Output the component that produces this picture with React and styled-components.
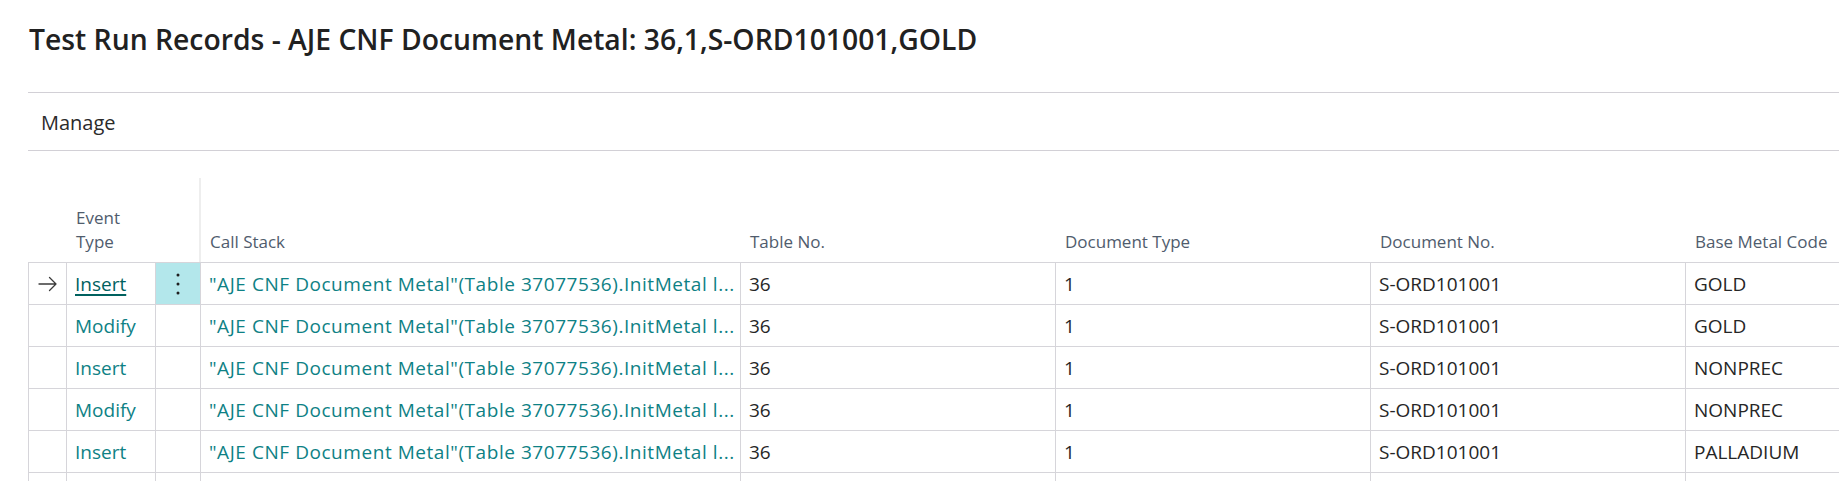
import React from "react";
import styled, { createGlobalStyle } from "styled-components";

const GlobalStyle = createGlobalStyle`
  html, body {
    margin: 0;
    background: #ffffff;
    overflow: hidden;
  }
  body {
    font-family: "Open Sans", "Noto Sans", sans-serif;
    color: #212121;
  }
`;

const COLUMNS = "38px 89px 45px 540px 315px 315px 315px 1fr";

const records = [
  { event: "Insert", table: "36", docType: "1", docNo: "S-ORD101001", metal: "GOLD" },
  { event: "Modify", table: "36", docType: "1", docNo: "S-ORD101001", metal: "GOLD" },
  { event: "Insert", table: "36", docType: "1", docNo: "S-ORD101001", metal: "NONPREC" },
  { event: "Modify", table: "36", docType: "1", docNo: "S-ORD101001", metal: "NONPREC" },
  { event: "Insert", table: "36", docType: "1", docNo: "S-ORD101001", metal: "PALLADIUM" },
];

// shown truncated the same way the grid truncates it
const CALL_STACK = '"AJE CNF Document Metal"(Table 37077536).InitMetal l...';

function ArrowIcon() {
  return (
    <svg width="20" height="16" viewBox="0 0 20 16" fill="none">
      <path
        d="M1 8h17M11.5 1.5L18 8l-6.5 6.5"
        stroke="#3b3b3b"
        strokeWidth="1.3"
        strokeLinecap="round"
        strokeLinejoin="round"
      />
    </svg>
  );
}

function MoreIcon() {
  return (
    <svg width="4" height="22" viewBox="0 0 4 22">
      <circle cx="2" cy="2" r="1.5" fill="#1f1f1f" />
      <circle cx="2" cy="11" r="1.5" fill="#1f1f1f" />
      <circle cx="2" cy="20" r="1.5" fill="#1f1f1f" />
    </svg>
  );
}

export default function App() {
  return (
    <>
      <GlobalStyle />
      <Page>
        <Title>Test Run Records - AJE CNF Document Metal: 36,1,S-ORD101001,GOLD</Title>
        <ActionBar>
          <ActionItem>Manage</ActionItem>
        </ActionBar>

        <Grid>
          <HeaderRow>
            <HeadCell />
            <HeadCell>Event Type</HeadCell>
            <HeadCell />
            <HeadCell $divider>Call Stack</HeadCell>
            <HeadCell>Table No.</HeadCell>
            <HeadCell>Document Type</HeadCell>
            <HeadCell>Document No.</HeadCell>
            <HeadCell>Base Metal Code</HeadCell>
          </HeaderRow>

          {records.map((r, i) => {
            const selected = i === 0;
            return (
              <Row key={i}>
                <Cell $center>{selected && <ArrowIcon />}</Cell>
                <Cell>
                  <EventLink $selected={selected}>{r.event}</EventLink>
                </Cell>
                <Cell $center $active={selected}>
                  {selected && <MoreIcon />}
                </Cell>
                <Cell>
                  <StackText>{CALL_STACK}</StackText>
                </Cell>
                <Cell>{r.table}</Cell>
                <Cell>{r.docType}</Cell>
                <Cell>{r.docNo}</Cell>
                <Cell>{r.metal}</Cell>
              </Row>
            );
          })}

          <Row>
            {Array.from({ length: 8 }).map((_, i) => (
              <Cell key={i} />
            ))}
          </Row>
        </Grid>
      </Page>
    </>
  );
}

const Page = styled.div`
  padding: 19px 0 0 28px;
`;

const Title = styled.h1`
  margin: 0 0 0 1px;
  font-size: 28.3px;
  font-weight: 600;
  line-height: 40px;
  color: #212121;
  white-space: nowrap;
`;

const ActionBar = styled.div`
  margin-top: 33px;
  height: 57px;
  border-top: 1px solid #d2d0d6;
  border-bottom: 1px solid #d2d0d6;
  display: flex;
  align-items: center;
  padding-left: 13px;
`;

const ActionItem = styled.span`
  font-size: 20px;
  line-height: 26px;
  color: #2b2b2b;
  padding-top: 2px;
`;

const Grid = styled.div`
  margin-top: 27px;
  width: 1811px;
`;

const HeaderRow = styled.div`
  display: grid;
  grid-template-columns: ${COLUMNS};
  height: 84px;
  border-bottom: 1px solid #d6d5da;
`;

const HeadCell = styled.div`
  display: flex;
  align-items: flex-end;
  padding: 0 8px 8px 9px;
  font-size: 17px;
  line-height: 24px;
  color: #505c6d;
  border-left: 1px solid transparent;
  ${(p) =>
    p.$divider &&
    `
    border-left-color: #eeeeee;
    box-shadow: -1px 0 0 #eeeeee;
  `}
`;

const Row = styled.div`
  display: grid;
  grid-template-columns: ${COLUMNS};
  height: 41px;
  border-bottom: 1px solid #d6d5da;
`;

const Cell = styled.div`
  display: flex;
  align-items: center;
  justify-content: ${(p) => (p.$center ? "center" : "flex-start")};
  min-width: 0;
  padding: ${(p) => (p.$center ? "0" : "0 4px 0 8px")};
  border-left: 1px solid #d6d5da;
  background: ${(p) => (p.$active ? "#b3e7eb" : "transparent")};
  font-size: 19px;
  line-height: 24px;
  color: #262626;
  white-space: nowrap;
`;

const EventLink = styled.span`
  color: ${(p) => (p.$selected ? "#00615f" : "#0e8185")};
  text-decoration: ${(p) => (p.$selected ? "underline" : "none")};
  text-decoration-thickness: 2px;
  text-underline-offset: 3px;
`;

const StackText = styled.span`
  display: block;
  overflow: hidden;
  white-space: nowrap;
  letter-spacing: 0.55px;
  color: #0e8185;
`;
